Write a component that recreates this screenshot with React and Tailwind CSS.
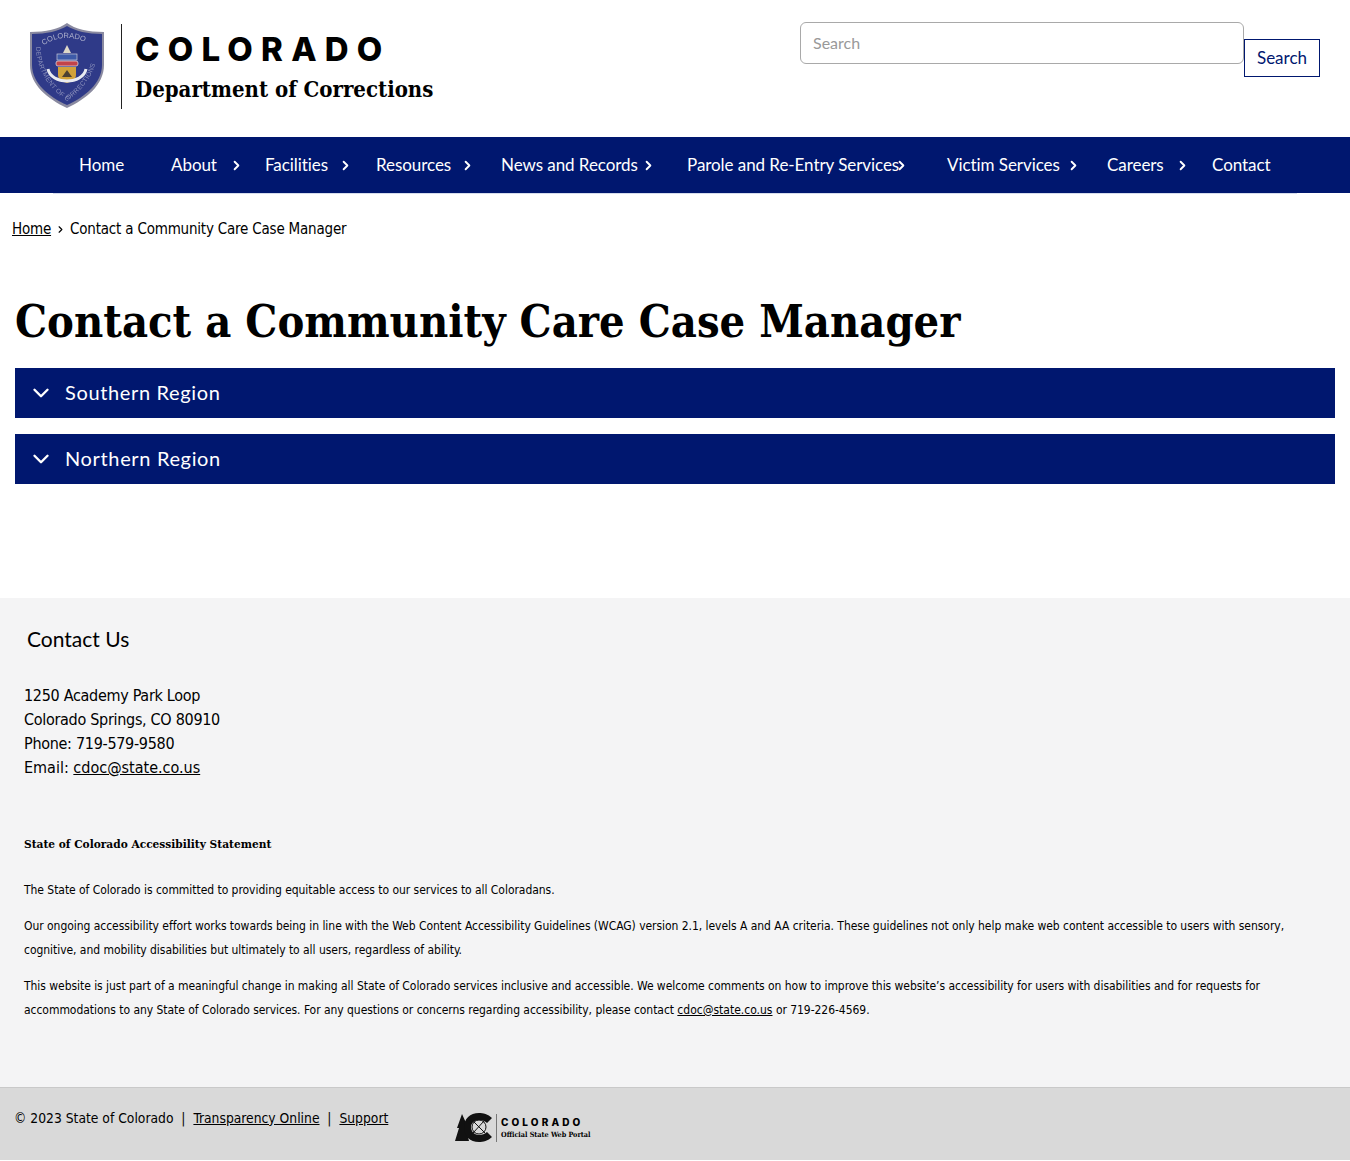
import { ChevronDown, ChevronRight } from 'lucide-react';

const NAV = [
  { label: 'Home', width: 'w-[92px]' },
  { label: 'About', width: 'w-[94px]', gap: 'ml-[12px]' },
  { label: 'Facilities', width: 'w-[111px]', gap: 'ml-[10px]' },
  { label: 'Resources', width: 'w-[125px]', gap: 'ml-[9px]' },
  { label: 'News and Records', width: 'w-[186px]', gap: 'ml-[3px]' },
  { label: 'Parole and Re-Entry Services', width: 'w-[260px]', gap: 'ml-[-5px]' },
  { label: 'Victim Services', width: 'w-[160px]', gap: 'ml-[6px]' },
  { label: 'Careers', width: 'w-[105px]', gap: 'ml-[11px]' },
  { label: 'Contact', width: 'w-[64px]' },
];

const SANS = "font-['Lato','Open_Sans',sans-serif]";
const BODY = "font-['DejaVu_Sans',sans-serif] [font-stretch:condensed]";

function Shield() {
  return (
    <svg width="78" height="86" viewBox="0 0 78 86" className="shrink-0 blur-[0.3px]">
      <path d="M39 0 C47 6 60 9 76 9 L76 42 C76 62 58 76 39 85 C20 76 2 62 2 42 L2 9 C18 9 31 6 39 0Z" fill="#8a8aa0" />
      <path d="M39 3 C47 8 60 11 74 11 L74 42 C74 60 57 74 39 82 C21 74 4 60 4 42 L4 11 C18 11 31 8 39 3Z" fill="#2f3a88" />
      <path id="ring-top" d="M12 27 C22 11 56 11 66 27" fill="none" />
      <path id="ring-bottom" d="M8 22 C8 48 22 66 39 78 C56 66 70 48 70 22" fill="none" />
      <text fontSize="7.5" fill="#aeb1cc" fontFamily="Liberation Sans">
        <textPath href="#ring-top" startOffset="6">COLORADO</textPath>
      </text>
      <text fontSize="6.5" fill="#8f94bd" fontFamily="Liberation Sans">
        <textPath href="#ring-bottom" startOffset="2" textLength="112">DEPARTMENT OF CORRECTIONS</textPath>
      </text>
      <path d="M39 22 L43 30 L35 30Z" fill="#ddd8c8" />
      <rect x="29" y="31" width="20" height="6" fill="#3d5aa8" stroke="#c9c9d6" strokeWidth="0.7" />
      <rect x="28" y="38" width="22" height="5" rx="2" fill="#c2434a" stroke="#e6e6ea" strokeWidth="0.7" />
      <path d="M30 44 H48 V52 C48 57 43 59 39 60 C35 59 30 57 30 52Z" fill="#d2a23a" />
      <path d="M34 54 L39 47 L44 54Z" fill="#4d4032" />
      <path d="M20 46 C23 62 55 62 58 46" fill="none" stroke="#e9ebf1" strokeWidth="3" />
    </svg>
  );
}

function PortalMark() {
  return (
    <svg width="38" height="30" viewBox="0 0 38 30" className="shrink-0">
      <path d="M7 1 L12 12 L10 12 L14 28 L0 28 L4 15 L2 15Z" fill="#111" />
      <path d="M37 5 C33 1 28 0 24 0 C15 0 9 6 9 14 C9 23 15 29 24 29 C28 29 33 28 37 24 L32 19 C30 21 27 22 24 22 C20 22 16 19 16 14 C16 10 20 7 24 7 C27 7 30 8 32 10Z" fill="#111" />
      <circle cx="24" cy="14" r="7" fill="none" stroke="#111" strokeWidth="1" />
      <path d="M18 20 L29 8 M19 9 L30 20" stroke="#111" strokeWidth="1" />
    </svg>
  );
}

function Region({ name }) {
  return (
    <button className="flex h-[50px] w-full items-center bg-[#00176f] pl-[13px] text-white">
      <ChevronDown size={26} strokeWidth={2.2} />
      <span className={`${SANS} ml-[11px] pb-[2px] text-[20px] tracking-[0.65px]`}>{name}</span>
    </button>
  );
}

export default function App() {
  return (
    <div className={`${BODY} bg-white text-black`}>
      {/* Header */}
      <header className="flex h-[137px] pl-[28px] pr-[30px]">
        <div className="mt-[23px] flex h-[88px] items-start">
          <Shield />
          <div className="ml-[15px] mt-[1px] h-[85px] w-px bg-[#222]" />
          <div className="ml-[13px] mt-[7px]">
            <div className="font-['Inter',sans-serif] text-[33px] font-extrabold leading-[38px] tracking-[8.2px]">COLORADO</div>
            <div className="mt-[6px] font-['DejaVu_Serif',serif] text-[22px] font-bold leading-[30px] [font-stretch:condensed]">Department of Corrections</div>
          </div>
        </div>
        <div className="ml-auto mt-[22px] flex items-start">
          <div className="flex h-[42px] w-[444px] items-center rounded-[6px] border border-[#a9a9a9] px-3">
            <input placeholder="Search" className={`${SANS} w-full bg-transparent text-[16px] outline-none placeholder:text-[#999]`} />
          </div>
          <button className={`${SANS} mt-[17px] h-[38px] w-[76px] border border-[#00176f] text-[17px] text-[#00176f]`}>Search</button>
        </div>
      </header>

      {/* Nav */}
      <nav className="h-[56px] bg-[#00176f]">
        <ul className={`${SANS} flex h-[56px] items-center pl-[79px] text-[17px] tracking-[-0.06px] text-white`}>
          {NAV.map((item) => (
            <li key={item.label} className={`flex items-center whitespace-nowrap ${item.width}`}>
              <span>{item.label}</span>
              {item.gap && <ChevronRight size={15} strokeWidth={3} className={`shrink-0 ${item.gap}`} />}
            </li>
          ))}
        </ul>
      </nav>
      <div className="mx-[53px] h-px bg-[#d5dcec]" />

      {/* Breadcrumb */}
      <div className="flex items-center pl-[12px] pt-[25px] text-[15px] leading-[20px] tracking-[-0.2px]">
        <a href="#" className="underline">Home</a>
        <ChevronRight size={11} strokeWidth={2.5} className="mx-[4px]" />
        <span>Contact a Community Care Case Manager</span>
      </div>

      {/* Main */}
      <main className="px-[15px] pt-[51px]">
        <h1 className="font-['DejaVu_Serif',serif] text-[44.8px] font-bold leading-[64px] tracking-normal [font-stretch:condensed]">Contact a Community Care Case Manager</h1>
        <div className="mt-[14px] flex flex-col gap-[16px]">
          <Region name="Southern Region" />
          <Region name="Northern Region" />
        </div>
      </main>

      {/* Footer */}
      <footer className="mt-[114px] h-[489px] bg-[#f4f4f5] pl-[24px] pr-[40px] pt-[27px]">
        <h2 className={`${SANS} ml-[3px] text-[21px] leading-[28px]`}>Contact Us</h2>
        <address className="mt-[31px] text-[16px] not-italic leading-[24px] tracking-[-0.3px]">
          <div>1250 Academy Park Loop</div>
          <div>Colorado Springs, CO 80910</div>
          <div>Phone: 719-579-9580</div>
          <div className="tracking-normal">Email: <a href="#" className="underline">cdoc@state.co.us</a></div>
        </address>
        <div className="mt-[52px] text-[12px] leading-[24px] tracking-[-0.045px]">
          <h3 className="font-['DejaVu_Serif',serif] text-[11.8px] font-bold tracking-normal [font-stretch:condensed]">State of Colorado Accessibility Statement</h3>
          <p className="mt-[22px]">The State of Colorado is committed to providing equitable access to our services to all Coloradans.</p>
          <p className="mt-[12px]">Our ongoing accessibility effort works towards being in line with the Web Content Accessibility Guidelines (WCAG) version 2.1, levels A and AA criteria. These guidelines not only help make web content accessible to users with sensory, cognitive, and mobility disabilities but ultimately to all users, regardless of ability.</p>
          <p className="mt-[12px]">This website is just part of a meaningful change in making all State of Colorado services inclusive and accessible. We welcome comments on how to improve this website’s accessibility for users with disabilities and for requests for accommodations to any State of Colorado services. For any questions or concerns regarding accessibility, please contact <a href="#" className="underline tracking-normal">cdoc@state.co.us</a> or 719-226-4569.</p>
        </div>
      </footer>

      {/* Bottom bar */}
      <div className="flex h-[73px] border-t border-[#c9c9c9] bg-[#d9d9d9] pl-[14px] text-[13.75px]">
        <div className="mt-[20px] flex h-[20px] w-[441px] items-center whitespace-pre">
          <span>© 2023 State of Colorado  |  </span>
          <a href="#" className="underline">Transparency Online</a>
          <span>  |  </span>
          <a href="#" className="underline">Support</a>
        </div>
        <div className="mt-[25px] flex h-[30px] items-center">
          <PortalMark />
          <div className="ml-[3px] h-[28px] w-px bg-[#777]" />
          <div className="ml-[4px] -mt-px">
            <div className="font-['Inter',sans-serif] text-[10px] font-extrabold leading-[12px] tracking-[3.1px]">COLORADO</div>
            <div className="mt-[2px] font-['DejaVu_Serif',serif] text-[7.2px] font-bold leading-[10px] [font-stretch:condensed]">Official State Web Portal</div>
          </div>
        </div>
      </div>
    </div>
  );
}
